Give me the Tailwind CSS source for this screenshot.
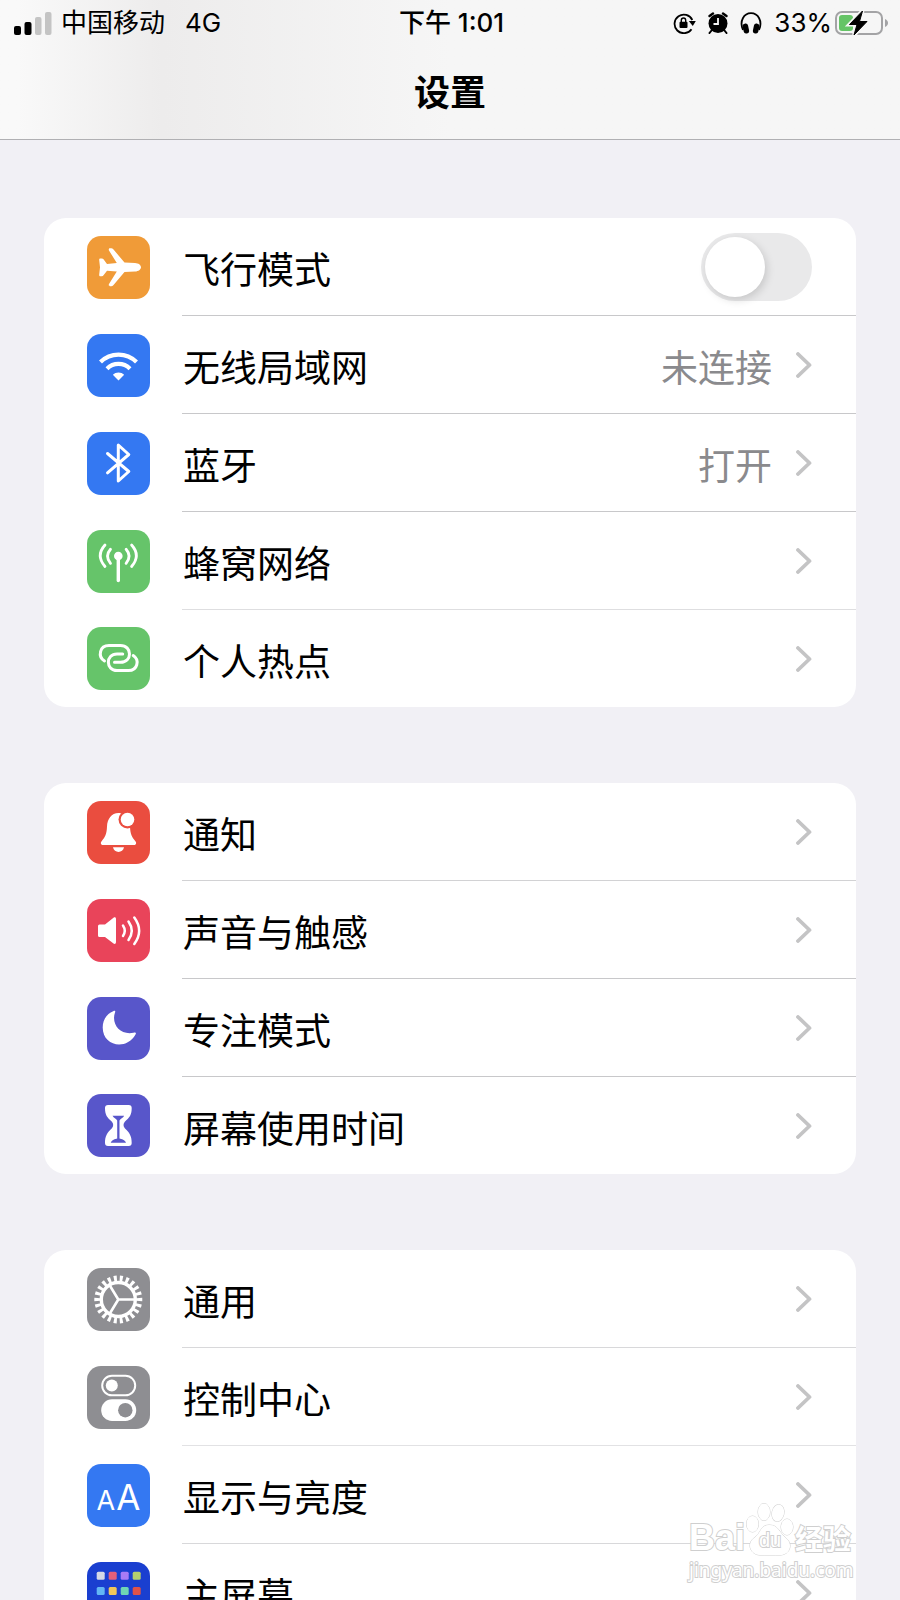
<!DOCTYPE html>
<html lang="zh-CN">

<head>
    <meta charset="UTF-8">
    <meta name="viewport" content="width=device-width, initial-scale=1.0">
    <title>设置</title>
    <script src="https://cdn.jsdelivr.net/npm/@tailwindcss/browser@4"></script>
</head>

<body class="relative h-screen flex flex-col overflow-hidden bg-[#f1f0f5] text-black font-['Inter','Noto_Sans_CJK_SC',sans-serif]">

    <!-- Shared symbols -->
    <svg class="hidden">
        <symbol id="chevron" viewBox="0 0 16 26">
            <path d="M2 2l11.500 11L2 24" fill="none" stroke="#c4c4c5" stroke-width="3.800" stroke-linecap="round" stroke-linejoin="round" />
        </symbol>
    </svg>

    <!-- Header -->
    <header class="shrink-0 border-b border-[#b0b0b3] bg-linear-to-r from-[#f9f9f9] from-2% via-[#edecec] via-18% to-[#f6f6f6] to-50%">
        <div class="grid grid-cols-[1fr_auto_1fr] items-center h-[46px] pl-[14px] pr-[11px] text-[26px] leading-[44px]">
            <div class="flex items-center">
                <svg class="w-[38px] h-6 mr-[9px]" viewBox="0 0 38 24">
                    <rect x="0" y="15" width="7" height="9" rx="2" />
                    <rect x="10.500" y="11" width="7" height="13" rx="2" />
                    <rect x="21" y="6" width="6.500" height="18" rx="2" fill="#c4c4c4" />
                    <rect x="31" y="1" width="6.500" height="23" rx="2" fill="#c4c4c4" />
                </svg>
                <span>中国移动</span>
                <span class="ml-5">4G</span>
            </div>
            <div class="font-medium">下午 1:01</div>
            <div class="flex items-center justify-end">
                <!-- rotation lock -->
                <svg class="w-[23px] h-[22px] mr-3" viewBox="0 0 23 22">
                    <path d="M18.500 17.200A9.300 9.300 0 1 1 19.300 8" fill="none" stroke="#000" stroke-width="1.800" />
                    <path d="M15.800 9h7l-3 5z" />
                    <rect x="6.500" y="9.800" width="8" height="6.200" rx="1" />
                    <path d="M8.300 10V8.200a2.200 2.200 0 0 1 4.400 0V10" fill="none" stroke="#000" stroke-width="1.400" />
                </svg>
                <!-- alarm -->
                <svg class="w-5 h-[22px] mr-3" viewBox="0 0 20 22">
                    <circle cx="10" cy="11.500" r="9.500" />
                    <path d="M1.500 4L5 1.500M18.500 4L15 1.500" stroke="#000" stroke-width="2.400" stroke-linecap="round" />
                    <path d="M3.500 18.500L1.500 21M16.500 18.500l2 2.500" stroke="#000" stroke-width="2" stroke-linecap="round" />
                    <path d="M10 6V12H5.500" fill="none" stroke="#f6f6f6" stroke-width="1.800" />
                </svg>
                <!-- headphones -->
                <svg class="w-[22px] h-[22px] mr-3" viewBox="0 0 22 22">
                    <path d="M3 18C-1 9 4 1.200 11 1.200S23 9 19 18" fill="none" stroke="#000" stroke-width="1.800" />
                    <rect x="3" y="11.500" width="5.500" height="10" rx="2.600" transform="rotate(-12 6 16)" />
                    <rect x="13.500" y="11.500" width="5.500" height="10" rx="2.600" transform="rotate(12 16 16)" />
                </svg>
                <span>33%</span>
                <!-- battery -->
                <svg class="w-[54px] h-7 ml-[3px]" viewBox="0 0 54 28">
                    <rect x="1" y="3" width="46" height="22" rx="6" fill="none" stroke="#a3a3a5" stroke-width="2" />
                    <path d="M50 10c4 1.500 4 6.500 0 8z" fill="#a3a3a5" />
                    <rect x="4" y="6" width="14" height="16" rx="3" fill="#65c466" />
                    <path d="M27.500 2L14.500 15.500H22L19 26L32 12.500H24.500Z" stroke="#f6f6f6" stroke-width="4" />
                    <path d="M27.500 2L14.500 15.500H22L19 26L32 12.500H24.500Z" stroke="#000" stroke-width="1" stroke-linejoin="round" />
                </svg>
            </div>
        </div>
        <h1 class="h-[93px] text-center text-[36px] leading-[94px] font-bold">设置</h1>
    </header>

    <!-- Settings list -->
    <main class="flex-1 overflow-hidden flex flex-col gap-[76px] pt-[78px] px-11 text-[37px] leading-[54px]">

        <ul class="shrink-0 rounded-[22px] bg-white overflow-hidden">
            <li class="flex items-center pl-[43px]">
                <svg class="size-[63px] rounded-[14px] bg-[#f09b38]" viewBox="0 0 63 63" fill="#fff">
                    <path d="M22 14.500c-.600-1.400 0-2.200 1-2.200h1.200c.900 0 1.500.300 2.100 1L37.500 26.500L48 27c3.500.200 6 2 6 4.300s-2.500 4.100-6 4.300l-10.500.500L26.300 49.300c-.600.700-1.200 1-2.100 1H23c-1 0-1.600-.800-1-2.200L29.800 35.500L20 34.700L16.500 39.300c-.500.600-.900.900-1.600.900H13.500c-1 0-1.400-.500-1.300-1.500L13 31.300L12.200 23.900c-.100-1 .300-1.500 1.300-1.500h1.400c.700 0 1.100.300 1.600.900L20 27.900L29.800 27.100z" />
                </svg>
                <div class="flex-1 flex items-center h-[98px] ml-8 pl-px pr-11 border-b border-[#c8c8ca]">
                    <label for="airplane" class="flex-1 pt-2">飞行模式</label>
                    <input id="airplane" type="checkbox" role="switch" class="appearance-none w-[111px] h-[68px] p-1 rounded-full bg-[#e9e9ea] checked:bg-[#65c466] before:block before:size-[60px] before:rounded-full before:bg-white before:shadow-[2px_3px_8px_rgba(0,0,0,0.15)] checked:before:translate-x-[43px]">
                </div>
            </li>
            <li>
                <a href="#wifi" class="flex items-center pl-[43px]">
                    <svg class="size-[63px] rounded-[14px] bg-[#3478f2]" viewBox="0 0 63 63" fill="none" stroke="#fff" stroke-width="4.200">
                        <path d="M13.500 28A25.500 25.500 0 0 1 49.500 28" />
                        <path d="M20 34.700A16.300 16.300 0 0 1 43 34.700" />
                        <path d="M31.500 46.500L25.800 40.800A8 8 0 0 1 37.200 40.800Z" fill="#fff" stroke="none" />
                    </svg>
                    <span class="flex-1 flex items-center h-[98px] ml-8 pl-px pr-11 border-b border-[#c8c8ca]">
                        <span class="flex-1 pt-2">无线局域网</span>
                        <span class="pt-2 mr-6 text-[#8a8a8d]">未连接</span>
                        <svg class="w-4 h-[26px]"><use href="#chevron" /></svg>
                    </span>
                </a>
            </li>
            <li>
                <a href="#bluetooth" class="flex items-center pl-[43px]">
                    <svg class="size-[63px] rounded-[14px] bg-[#3478f2]" viewBox="0 0 63 63" fill="none" stroke="#fff" stroke-width="3" stroke-linecap="round" stroke-linejoin="round">
                        <path d="M20.500 21.500L41.800 39.500L31.300 49V13L41.800 22.500L20.500 40.800" />
                    </svg>
                    <span class="flex-1 flex items-center h-[98px] ml-8 pl-px pr-11 border-b border-[#c8c8ca]">
                        <span class="flex-1 pt-2">蓝牙</span>
                        <span class="pt-2 mr-6 text-[#8a8a8d]">打开</span>
                        <svg class="w-4 h-[26px]"><use href="#chevron" /></svg>
                    </span>
                </a>
            </li>
            <li>
                <a href="#cellular" class="flex items-center pl-[43px]">
                    <svg class="size-[63px] rounded-[14px] bg-[#66c46a]" viewBox="0 0 63 63" fill="none" stroke="#fff" stroke-width="2.800" stroke-linecap="round">
                        <circle cx="31.300" cy="26" r="4.300" fill="#fff" stroke="none" />
                        <path d="M31.300 27V50.500" stroke-width="3.400" />
                        <path d="M23.500 19.200Q17.500 26 23.500 33.300M39.100 19.200Q45.100 26 39.100 33.300" />
                        <path d="M18 15Q8.500 25.500 18 36.500M44.600 15Q54.100 25.500 44.600 36.500" />
                    </svg>
                    <span class="flex-1 flex items-center h-[98px] ml-8 pl-px pr-11 border-b border-[#dedee0]">
                        <span class="flex-1 pt-2">蜂窝网络</span>
                        <svg class="w-4 h-[26px]"><use href="#chevron" /></svg>
                    </span>
                </a>
            </li>
            <li>
                <a href="#hotspot" class="flex items-center pl-[43px]">
                    <svg class="size-[63px] rounded-[14px] bg-[#66c46a]" viewBox="0 0 63 63" fill="none" stroke="#fff" stroke-width="3" stroke-linecap="round">
                        <path d="M17.500 34C10.500 29.500 12.500 18.500 22 18.500H33.500C45.500 18.500 45.500 35.300 33.500 35.300H27.500" />
                        <path d="M46.200 28.500C53 33 50.500 43.600 41.500 43.600H30C18.500 43.600 18.500 27 30 27H35.700" />
                    </svg>
                    <span class="flex-1 flex items-center h-[97px] ml-8 pl-px pr-11">
                        <span class="flex-1 pt-2">个人热点</span>
                        <svg class="w-4 h-[26px]"><use href="#chevron" /></svg>
                    </span>
                </a>
            </li>
        </ul>

        <ul class="shrink-0 rounded-[22px] bg-white overflow-hidden">
            <li>
                <a href="#notifications" class="flex items-center pl-[43px]">
                    <svg class="size-[63px] rounded-[14px] bg-[#ea4d3f]" viewBox="0 0 63 63" fill="#fff">
                        <path d="M31.500 12C24.500 12 20.300 18 20 25.500C19.700 33.500 18 36 14.800 40C13 42.300 14 44 16 44H47C49 44 50 42.300 48.200 40C45 36 43.300 33.500 43 25.500L40 12Z" />
                        <path d="M26 46.300H37C36 52.500 27 52.500 26 46.300Z" />
                        <circle cx="40.500" cy="18.500" r="9" fill="#ea4d3f" />
                        <circle cx="40.500" cy="18.500" r="6.800" />
                    </svg>
                    <span class="flex-1 flex items-center h-[98px] ml-8 pl-px pr-11 border-b border-[#d2d2d4]">
                        <span class="flex-1 pt-2">通知</span>
                        <svg class="w-4 h-[26px]"><use href="#chevron" /></svg>
                    </span>
                </a>
            </li>
            <li>
                <a href="#sounds" class="flex items-center pl-[43px]">
                    <svg class="size-[63px] rounded-[14px] bg-[#e9445a]" viewBox="0 0 63 63" fill="none" stroke="#fff" stroke-width="2.500" stroke-linecap="round">
                        <path d="M12.500 25.500H18L26.500 18.700C27.700 17.700 29 18.300 29 20V43C29 44.800 27.700 45.400 26.500 44.400L18 38H12.500Q11 38 11 36.500V27Q11 25.500 12.500 25.500Z" fill="#fff" stroke="none" />
                        <path d="M36 26.500Q39.500 31.800 36 37" />
                        <path d="M41.500 22.500Q48 31.800 41.500 41" />
                        <path d="M47.300 18.500Q57 31.800 47.300 45" />
                    </svg>
                    <span class="flex-1 flex items-center h-[98px] ml-8 pl-px pr-11 border-b border-[#c8c8ca]">
                        <span class="flex-1 pt-2">声音与触感</span>
                        <svg class="w-4 h-[26px]"><use href="#chevron" /></svg>
                    </span>
                </a>
            </li>
            <li>
                <a href="#focus" class="flex items-center pl-[43px]">
                    <svg class="size-[63px] rounded-[14px] bg-[#5856ca]" viewBox="0 0 63 63" fill="#fff">
                        <path d="M26.200 14.200C28 13.200 28.700 13.800 28 15.500C24 27 33 38.500 46.500 35.800C48.800 35.300 49.500 35.800 48.500 37.500C39 54 15.700 49 15.700 30.500C15.700 23 19.500 17 26.200 14.200Z" />
                    </svg>
                    <span class="flex-1 flex items-center h-[98px] ml-8 pl-px pr-11 border-b border-[#c8c8ca]">
                        <span class="flex-1 pt-2">专注模式</span>
                        <svg class="w-4 h-[26px]"><use href="#chevron" /></svg>
                    </span>
                </a>
            </li>
            <li>
                <a href="#screen-time" class="flex items-center pl-[43px]">
                    <svg class="size-[63px] rounded-[14px] bg-[#5856ca]" viewBox="0 0 63 63" fill="#fff">
                        <path d="M21 11H41.700Q44.700 11 44.700 14C44.700 21 42.500 23.500 38 27.500Q35 31 38 34.500C42.500 38.500 44.700 42 44.700 49Q44.700 52 41.700 52H21Q18 52 18 49C18 42 20.200 38.500 24.700 34.500Q27.700 31 24.700 27.500C20.200 23.500 18 21 18 14Q18 11 21 11Z" />
                        <path d="M25.500 21.800H37.200C36 24 33.500 24.500 32.500 26.500V44.500C34.500 45 38 46 39 48.700H23.700C24.700 46 28.200 45 30.200 44.500V26.500C29.200 24.500 26.700 24 25.500 21.800Z" fill="#5856ca" />
                    </svg>
                    <span class="flex-1 flex items-center h-[97px] ml-8 pl-px pr-11">
                        <span class="flex-1 pt-2">屏幕使用时间</span>
                        <svg class="w-4 h-[26px]"><use href="#chevron" /></svg>
                    </span>
                </a>
            </li>
        </ul>

        <ul class="shrink-0 rounded-[22px] bg-white overflow-hidden">
            <li>
                <a href="#general" class="flex items-center pl-[43px]">
                    <svg class="size-[63px] rounded-[14px] bg-[#8e8e92]" viewBox="0 0 63 63" fill="none" stroke="#fff">
                        <circle cx="31.300" cy="31.500" r="17" stroke-width="3.400" />
                        <circle cx="31.300" cy="31.500" r="21" stroke-width="6" pathLength="44" stroke-dasharray="1 1" stroke-dashoffset=".5" />
                        <path d="M31.300 31.500H48M31.300 31.500L22.500 17M31.300 31.500L22.500 46" stroke-width="2.600" />
                    </svg>
                    <span class="flex-1 flex items-center h-[98px] ml-8 pl-px pr-11 border-b border-[#d8d8da]">
                        <span class="flex-1 pt-2">通用</span>
                        <svg class="w-4 h-[26px]"><use href="#chevron" /></svg>
                    </span>
                </a>
            </li>
            <li>
                <a href="#control-center" class="flex items-center pl-[43px]">
                    <svg class="size-[63px] rounded-[14px] bg-[#8e8e92]" viewBox="0 0 63 63" fill="#fff">
                        <rect x="15.200" y="9.800" width="33" height="19.500" rx="9.700" fill="none" stroke="#fff" stroke-width="2" />
                        <circle cx="24.800" cy="19.500" r="6" />
                        <rect x="14.200" y="33.300" width="35" height="21.700" rx="10.800" />
                        <circle cx="38.300" cy="44.200" r="7.200" fill="#8e8e92" />
                    </svg>
                    <span class="flex-1 flex items-center h-[98px] ml-8 pl-px pr-11 border-b border-[#e2e2e4]">
                        <span class="flex-1 pt-2">控制中心</span>
                        <svg class="w-4 h-[26px]"><use href="#chevron" /></svg>
                    </span>
                </a>
            </li>
            <li>
                <a href="#display" class="flex items-center pl-[43px]">
                    <span class="size-[63px] rounded-[14px] bg-[#3478f2] flex items-baseline justify-center gap-px text-white text-[35px] leading-[66px]">
                        <span class="text-[27px]">A</span>A
                    </span>
                    <span class="flex-1 flex items-center h-[98px] ml-8 pl-px pr-11 border-b border-[#d8d8da]">
                        <span class="flex-1 pt-2">显示与亮度</span>
                        <svg class="w-4 h-[26px]"><use href="#chevron" /></svg>
                    </span>
                </a>
            </li>
            <li>
                <a href="#home-screen" class="flex items-center pl-[43px]">
                    <svg class="size-[63px] rounded-[14px] bg-[#1a3fd0]" viewBox="0 0 63 63">
                        <rect x="9.700" y="9.700" width="8" height="8" rx="1.500" fill="#d5d9e6" />
                        <rect x="21.700" y="9.700" width="8" height="8" rx="1.500" fill="#e4607a" />
                        <rect x="33.700" y="9.700" width="8" height="8" rx="1.500" fill="#a87bf5" />
                        <rect x="45.700" y="9.700" width="8" height="8" rx="1.500" fill="#b3cf6e" />
                        <rect x="9.700" y="25" width="8" height="8" rx="1.500" fill="#62b6f5" />
                        <rect x="21.700" y="25" width="8" height="8" rx="1.500" fill="#f0c75a" />
                        <rect x="33.700" y="25" width="8" height="8" rx="1.500" fill="#6fd6b4" />
                        <rect x="45.700" y="25" width="8" height="8" rx="1.500" fill="#e0524a" />
                    </svg>
                    <span class="flex-1 flex items-center h-[98px] ml-8 pl-px pr-11">
                        <span class="flex-1 pt-2">主屏幕</span>
                        <svg class="w-4 h-[26px]"><use href="#chevron" /></svg>
                    </span>
                </a>
            </li>
        </ul>
    </main>

    <!-- Watermark -->
    <div class="absolute right-[49px] bottom-5 w-[162px] text-white [-webkit-text-stroke:2px_#cfcfcf] [paint-order:stroke_fill] pointer-events-none">
        <div class="flex items-end justify-between h-14">
            <span class="text-[36px] leading-9 font-bold font-['Liberation_Sans',sans-serif]">Bai</span>
            <span class="relative w-12 h-[54px]">
                <svg class="size-full" viewBox="0 0 48 54" fill="#fff" stroke="#cfcfcf">
                    <ellipse cx="6.500" cy="22" rx="6" ry="8" />
                    <ellipse cx="18" cy="10" rx="6" ry="8.500" />
                    <ellipse cx="32" cy="11" rx="6" ry="8.500" transform="rotate(12 32 11)" />
                    <ellipse cx="41" cy="25" rx="6" ry="8" />
                    <path d="M23 23C14 23 15 32 8 36C0 42 5 53 14 53C20 53 28 53 34 53C43 53 48 43 40 36C33 31 33 23 23 23Z" />
                </svg>
                <span class="absolute inset-x-0 bottom-1 text-center text-[20px] leading-6 font-['Liberation_Sans',sans-serif]">du</span>
            </span>
            <span class="text-[28px] leading-8 font-bold">经验</span>
        </div>
        <div class="mt-1 text-[19px] leading-5 font-['Noto_Sans',sans-serif]">jingyan.baidu.com</div>
    </div>

</body>

</html>
